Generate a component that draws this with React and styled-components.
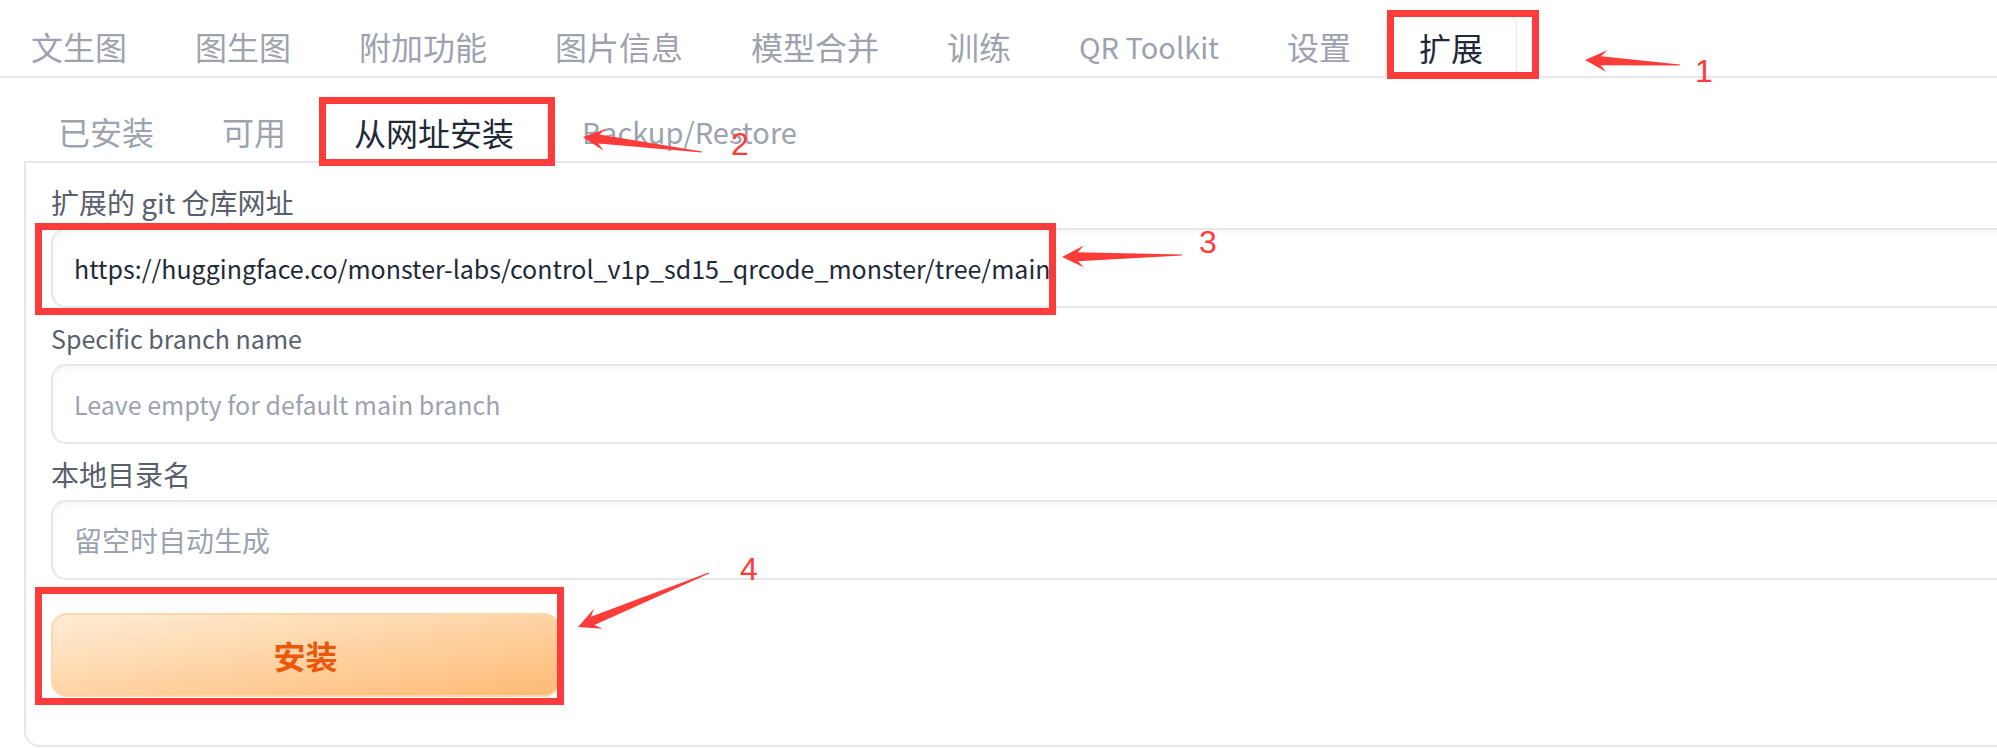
import React from "react";
import styled, { createGlobalStyle } from "styled-components";

const GlobalStyle = createGlobalStyle`
  html, body {
    margin: 0;
    padding: 0;
    background: #ffffff;
    overflow: hidden;
  }
  body {
    font-family: "Noto Sans CJK SC", "Noto Sans", sans-serif;
  }
`;

const Page = styled.div`
  position: relative;
  width: 2100px;
  height: 748px;
  overflow: hidden;
`;

const TabNav = styled.div`
  display: flex;
  align-items: flex-end;
  border-bottom: 2px solid #e5e7eb;
  padding-top: ${(p) => p.$top || 0}px;
  margin-left: ${(p) => p.$left || 0}px;
`;

// latin labels render wider in the CJK face, so they get a smaller size
const Tab = styled.div`
  box-sizing: border-box;
  display: flex;
  align-items: center;
  padding: 0 33px;
  border: 1px solid ${(p) => (p.$active ? "#e5e7eb" : "transparent")};
  border-bottom: none;
  border-radius: 10px 10px 0 0;
  background: ${(p) => (p.$active ? "#ffffff" : "transparent")};
  margin-bottom: ${(p) => (p.$active ? "-2px" : "0")};
  height: ${(p) => (p.$active ? "63px" : "61px")};
  color: ${(p) => (p.$active ? "#1f2937" : "#9ca3af")};
  font-size: ${(p) => (p.$latin ? 29 : 32)}px;
  white-space: nowrap;
`;

const SubSection = styled.div`
  margin: 22px 0 0 24px;
`;

const Panel = styled.div`
  box-sizing: border-box;
  height: 584px;
  border: 2px solid #e5e7eb;
  border-top: none;
  border-radius: 0 0 16px 16px;
  padding: 22px 0 0 25px;
  display: flex;
  flex-direction: column;
  gap: 13px;
`;

const Field = styled.div`
  display: flex;
  flex-direction: column;
  gap: 8px;
`;

const Label = styled.div`
  font-size: ${(p) => (p.$latin ? 25 : 28)}px;
  line-height: 35px;
  color: #58606c;
`;

const TextBox = styled.div`
  box-sizing: border-box;
  height: 80px;
  display: flex;
  align-items: center;
  padding: 0 21px;
  border: 2px solid #e5e7eb;
  border-radius: 15px;
  background: #ffffff;
  box-shadow: inset 0 4px 8px rgba(0, 0, 0, 0.035);
  font-size: ${(p) => (p.$latin ? 25 : 28)}px;
  color: ${(p) => (p.$placeholder ? "#9ca3af" : "#1f2937")};
  white-space: nowrap;
`;

const PrimaryButton = styled.div`
  box-sizing: border-box;
  width: 509px;
  height: 84px;
  margin-top: 20px;
  display: flex;
  align-items: center;
  justify-content: center;
  border: 2px solid #fed7aa;
  border-radius: 16px;
  background: linear-gradient(to bottom right, #ffedd5, #fdba74);
  color: #ea580c;
  font-size: 32px;
  font-weight: 700;
`;

const Overlay = styled.div`
  position: absolute;
  inset: 0;
  pointer-events: none;
`;

const RedBox = styled.div`
  position: absolute;
  box-sizing: border-box;
  border: 7px solid #fc3b3b;
`;

const Digit = styled.span`
  position: absolute;
  font-family: "Liberation Sans", sans-serif;
  font-size: 32px;
  line-height: 32px;
  color: #fc3b3b;
`;

const ArrowLayer = styled.svg`
  position: absolute;
  left: 0;
  top: 0;
`;

const topTabs = ["文生图", "图生图", "附加功能", "图片信息", "模型合并", "训练", "QR Toolkit", "设置", "扩展"];
const subTabs = ["已安装", "可用", "从网址安装", "Backup/Restore"];
const isLatin = (t) => /^[\x20-\x7e]+$/.test(t);

const boxes = [
  { x: 1387, y: 10, w: 152, h: 69 },
  { x: 319, y: 97, w: 236, h: 69 },
  { x: 35, y: 223, w: 1021, h: 92 },
  { x: 35, y: 587, w: 529, h: 118 },
];

const arrows = [
  { tail: [1680, 65], tip: [1585, 60], n: "1", nx: 1695, ny: 55 },
  { tail: [702, 152], tip: [583, 137], n: "2", nx: 731, ny: 128 },
  { tail: [1182, 255], tip: [1062, 257], n: "3", nx: 1199, ny: 226 },
  { tail: [709, 573], tip: [578, 627], n: "4", nx: 740, ny: 553 },
];

function arrowPoints([tx, ty], [px, py]) {
  const dx = px - tx;
  const dy = py - ty;
  const len = Math.hypot(dx, dy);
  const ux = dx / len;
  const uy = dy / len;
  const nx = -uy;
  const ny = ux;
  const h = 22;
  const w = 11;
  const at = (a, b) => [px - ux * a + nx * b, py - uy * a + ny * b];
  const pts = [
    [px, py],
    at(h, w),
    at(h * 0.72, 4.5),
    [tx + nx * 0.6, ty + ny * 0.6],
    [tx - nx * 0.6, ty - ny * 0.6],
    at(h * 0.72, -4.5),
    at(h, -w),
  ];
  return pts.map((p) => p.map((v) => v.toFixed(1)).join(",")).join(" ");
}

export default function App() {
  return (
    <Page>
      <GlobalStyle />
      <TabNav $top={15} $left={-3}>
        {topTabs.map((t) => (
          <Tab key={t} $active={t === "扩展"} $latin={isLatin(t)}>
            {t}
          </Tab>
        ))}
      </TabNav>

      <SubSection>
        <TabNav>
          {subTabs.map((t) => (
            <Tab key={t} $active={t === "从网址安装"} $latin={isLatin(t)}>
              {t}
            </Tab>
          ))}
        </TabNav>
        <Panel>
          <Field>
            <Label>扩展的 git 仓库网址</Label>
            <TextBox $latin>https://huggingface.co/monster-labs/control_v1p_sd15_qrcode_monster/tree/main</TextBox>
          </Field>
          <Field>
            <Label $latin>Specific branch name</Label>
            <TextBox $latin $placeholder>Leave empty for default main branch</TextBox>
          </Field>
          <Field>
            <Label>本地目录名</Label>
            <TextBox $placeholder>留空时自动生成</TextBox>
          </Field>
          <PrimaryButton>安装</PrimaryButton>
        </Panel>
      </SubSection>

      <Overlay>
        {boxes.map((b, i) => (
          <RedBox key={i} style={{ left: b.x, top: b.y, width: b.w, height: b.h }} />
        ))}
        <ArrowLayer width="2100" height="748">
          {arrows.map((a) => (
            <polygon key={a.n} points={arrowPoints(a.tail, a.tip)} fill="#fc3b3b" />
          ))}
        </ArrowLayer>
        {arrows.map((a) => (
          <Digit key={a.n} style={{ left: a.nx, top: a.ny }}>
            {a.n}
          </Digit>
        ))}
      </Overlay>
    </Page>
  );
}
